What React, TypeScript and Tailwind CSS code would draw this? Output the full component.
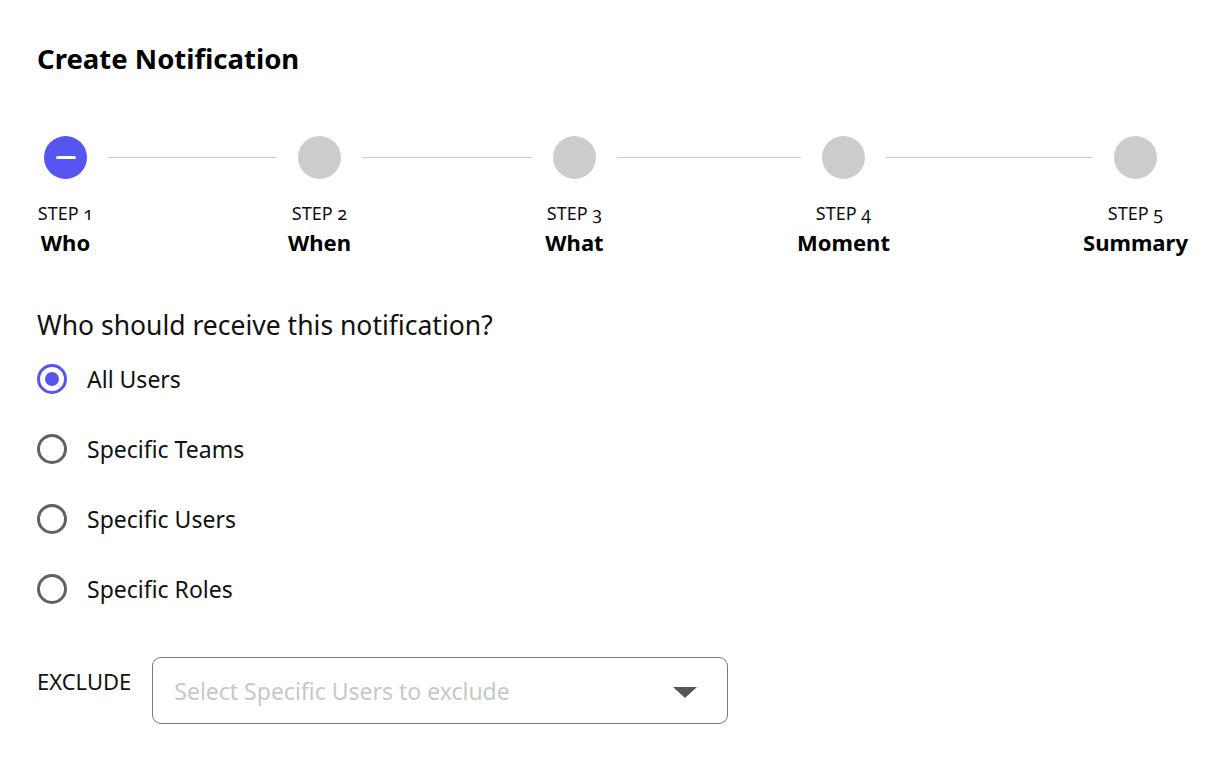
import { useState } from "react";

const steps = [
  { n: "1", label: "Who" },
  { n: "2", label: "When" },
  { n: "3", label: "What" },
  { n: "4", label: "Moment" },
  { n: "5", label: "Summary" },
];

// connector widths between circles (steps are not evenly spaced)
const lineWidths = ["w-[169px]", "w-[170px]", "w-[184px]", "w-[207px]"];

const options = ["All Users", "Specific Teams", "Specific Users", "Specific Roles"];

function Step({ n, label, active }: { n: string; label: string; active: boolean }) {
  return (
    <div className="flex w-[43px] shrink-0 flex-col items-center">
      <div
        className={`flex h-[43px] w-[43px] items-center justify-center rounded-full ${
          active ? "bg-[#5555f2]" : "bg-[#cccccc]"
        }`}
      >
        {active && <span className="h-[2.5px] w-[20px] rounded-full bg-white" />}
      </div>
      <div className="mt-[22px] whitespace-nowrap text-center">
        <div className="text-[18px] leading-[24px] text-[#111] [font-feature-settings:'onum']">
          STEP {n}
        </div>
        <div className="mt-[4px] text-[22px] font-bold leading-[26px] text-black">{label}</div>
      </div>
    </div>
  );
}

function Radio({ label, checked, onClick }: { label: string; checked: boolean; onClick: () => void }) {
  return (
    <button onClick={onClick} className="flex h-[40px] items-center gap-[20px] text-left">
      <span
        className={`flex h-[30px] w-[30px] items-center justify-center rounded-full border-[3px] ${
          checked ? "border-[#5555f2]" : "border-[#616161]"
        }`}
      >
        {checked && <span className="h-[14px] w-[14px] rounded-full bg-[#5555f2]" />}
      </span>
      <span className="text-[23px] leading-[30px] text-[#111]">{label}</span>
    </button>
  );
}

export default function App() {
  const [who, setWho] = useState("All Users");

  return (
    <div className="min-h-[776px] w-full bg-white pl-[37px] pt-[41px] font-['Noto_Sans',sans-serif] text-black">
      <h1 className="text-[27.5px] font-bold leading-[36px]">Create Notification</h1>

      {/* Stepper */}
      <div className="mt-[59px] flex items-start pl-[7px]">
        {steps.map((s, i) => (
          <div key={s.n} className="flex items-start">
            <Step n={s.n} label={s.label} active={i === 0} />
            {i < lineWidths.length && (
              <div className={`mx-[21px] mt-[21px] h-px shrink-0 bg-[#cccccc] ${lineWidths[i]}`} />
            )}
          </div>
        ))}
      </div>

      {/* Who */}
      <div className="mt-[54px] text-[26.5px] leading-[32px] text-[#111]">
        Who should receive this notification?
      </div>
      <div className="mt-[18px] flex flex-col gap-[30px]">
        {options.map((o) => (
          <Radio key={o} label={o} checked={who === o} onClick={() => setWho(o)} />
        ))}
      </div>

      {/* Exclude */}
      <div className="mt-[48px] flex items-start gap-[21px]">
        <div className="mt-[10px] text-[22px] leading-[28px] text-[#111]">EXCLUDE</div>
        <div className="flex h-[67px] w-[576px] items-center justify-between rounded-[9px] border border-[#7a7a7a] pl-[21px] pr-[30px]">
          <span className="text-[23px] leading-[30px] text-[#c8c8c8]">Select Specific Users to exclude</span>
          <svg width="24" height="11" viewBox="0 0 24 11" className="mt-[3px]">
            <polygon points="0,0 24,0 12,11" fill="#555" />
          </svg>
        </div>
      </div>
    </div>
  );
}
